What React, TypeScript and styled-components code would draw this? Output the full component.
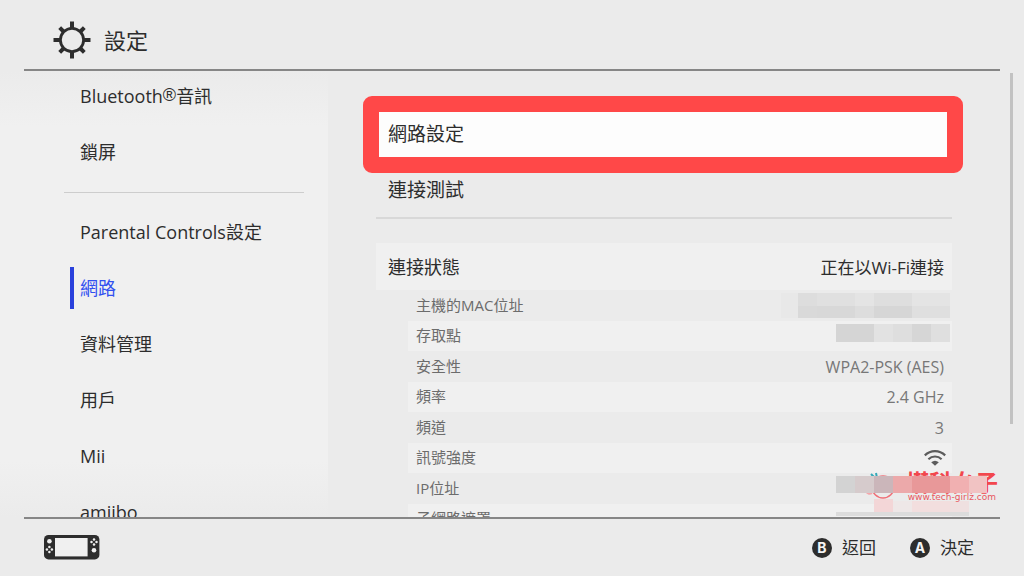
import React from "react";
import styled, { createGlobalStyle } from "styled-components";

const GlobalStyle = createGlobalStyle`
  * { box-sizing: border-box; }
  body {
    margin: 0;
    background: #ebebeb;
    color: #2d2d2d;
    font-family: "Open Sans", "Noto Sans CJK TC", sans-serif;
  }
  button { font: inherit; color: inherit; border: 0; background: none; padding: 0; text-align: left; cursor: pointer; }
`;

const Page = styled.div`
  position: relative;
  display: flex;
  flex-direction: column;
  height: 100vh;
  overflow: hidden;
`;

const Header = styled.header`
  display: flex;
  align-items: center;
  gap: 13px;
  height: 71px;
  margin: 0 24px;
  padding: 11px 0 0 29px;
  border-bottom: 2px solid #868686;
`;

const Title = styled.h1`
  margin: 0;
  font-size: 22px;
  line-height: 32px;
  font-weight: 400;
`;

const Body = styled.div`
  display: flex;
  flex: 1;
  min-height: 0;
`;

const Sidebar = styled.nav`
  display: flex;
  flex-direction: column;
  gap: 14px;
  flex: 0 0 328px;
  padding: 4px 24px 0 64px;
  overflow: hidden;
  background: linear-gradient(#ebebeb, #f0f0f0 56px, #f0f0f0 calc(100% - 56px), #ebebeb);
`;

const NavItem = styled.a<{ $active?: boolean }>`
  display: flex;
  flex: none;
  align-items: center;
  height: 42px;
  margin-left: 6px;
  padding-left: 6px;
  border-left: 4px solid ${(p) => (p.$active ? "#2a41dc" : "transparent")};
  color: ${(p) => (p.$active ? "#3250f0" : "#2d2d2d")};
  font-size: 18px;
  line-height: 24px;
  text-decoration: none;
  white-space: nowrap;
`;

const Registered = styled.span`
  font-family: "Liberation Sans", sans-serif;
  vertical-align: 2px;
  font-size: 18px;
  line-height: 16px;
`;

const NavDivider = styled.hr`
  flex: none;
  width: 100%;
  height: 1px;
  margin: 5px 0 4px;
  border: 0;
  background: #cdcdcd;
`;

const Panel = styled.main`
  flex: 1;
  min-width: 0;
  padding: 36px 58px 0 48px;
  overflow: hidden;
`;

const MenuRow = styled.button<{ $focused?: boolean }>`
  position: relative;
  display: flex;
  align-items: center;
  width: 100%;
  height: 56px;
  padding: 0 12px;
  border-bottom: 2px solid ${(p) => (p.$focused ? "transparent" : "#d8d8d8")};
  background: ${(p) => (p.$focused ? "#fdfdfd" : "none")};
  font-size: 19px;
  line-height: 28px;
`;

const FocusFrame = styled.span`
  position: absolute;
  inset: -11px -11px -12px -13px;
  border: 16px solid #ff4848;
  border-radius: 9px;
`;

const Status = styled.section`
  margin-top: 24px;
`;

const StatusHead = styled.div`
  display: flex;
  align-items: center;
  justify-content: space-between;
  height: 47px;
  padding: 0 8px 0 12px;
  background: #f0f0f0;
  font-size: 17px;
`;

const StatusTitle = styled.h2`
  margin: 0;
  font-size: 18px;
  line-height: 24px;
  font-weight: 400;
`;

const Details = styled.div`
  padding-left: 32px;
`;

const Table = styled.table`
  width: 100%;
  border-collapse: collapse;
  line-height: 20px;
`;

const DetailRow = styled.tr`
  height: 31px;
  &:nth-child(even) { height: 30px; background: #f0f0f0; }
`;

const Label = styled.th`
  padding: 0 8px 2px;
  font-size: 15px;
  font-weight: 400;
  text-align: left;
  color: #6c6c6c;
`;

const Value = styled.td<{ $inset?: number }>`
  padding: 0 ${(p) => p.$inset ?? 8}px;
  color: #777;
  font-size: 16px;
  text-align: right;
  svg { display: block; margin-left: auto; }
`;

const ScrollTrack = styled.div`
  flex: 0 0 14px;
  padding-top: 2px;
`;

const ScrollThumb = styled.div`
  width: 3px;
  height: 79%;
  background: #c2c2c2;
`;

const Footer = styled.footer`
  display: flex;
  align-items: center;
  justify-content: space-between;
  height: 59px;
  margin: 0 24px;
  padding: 0 26px 0 20px;
  border-top: 2px solid #868686;
`;

const Actions = styled.div`
  display: flex;
  gap: 34px;
`;

const Action = styled.button`
  display: flex;
  align-items: center;
  gap: 10px;
  font-size: 17px;
  line-height: 24px;
`;

const KeyBadge = styled.span`
  display: flex;
  align-items: center;
  justify-content: center;
  width: 20px;
  height: 20px;
  border-radius: 50%;
  background: #2d2d2d;
  color: #f4f4f4;
  font-family: Inter, sans-serif;
  font-size: 14px;
  font-weight: 700;
  line-height: 20px;
`;

const Watermark = styled.div`
  position: absolute;
  right: 26px;
  bottom: 57px;
  width: 162px;
  height: 48px;
`;

const BrandMark = styled.svg`
  position: absolute;
  left: 28px;
  top: 0;
`;

const Brand = styled.div`
  position: absolute;
  right: 0;
  top: 1px;
  color: #f2474d;
  font-size: 23px;
  line-height: 20px;
  font-weight: 700;
  white-space: nowrap;
`;

const BrandUrl = styled.div`
  position: absolute;
  right: 2px;
  top: 21px;
  color: #e8585f;
  font-family: "DejaVu Sans", sans-serif;
  font-size: 9px;
  line-height: 10px;
  white-space: nowrap;
`;

const BrandMask = styled.svg`
  position: absolute;
  left: 0;
  top: 0;
`;

type Cell = [x: number, y: number, w: number, h: number, fill: string];

const macCells: Cell[] = [
  [0, 0, 17, 25, "#e8e8e8"],
  [17, 0, 19, 13, "#dddddd"],
  [36, 0, 38, 13, "#e0e0e0"],
  [74, 0, 19, 13, "#e4e4e4"],
  [93, 0, 38, 13, "#dedede"],
  [131, 0, 38, 13, "#e4e4e4"],
  [17, 13, 19, 12, "#d9d9d9"],
  [36, 13, 38, 12, "#d8d8d8"],
  [74, 13, 19, 12, "#dddddd"],
  [93, 13, 38, 12, "#d6d6d6"],
  [131, 13, 38, 12, "#dfdfdf"],
];

const apCells: Cell[] = [
  [0, 0, 38, 18, "#d5d5d5"],
  [38, 0, 19, 18, "#e2e2e2"],
  [57, 0, 19, 18, "#dedede"],
  [76, 0, 19, 18, "#d6d6d6"],
  [95, 0, 19, 18, "#dfdfdf"],
];

const brandCells: Cell[] = [
  [0, 5, 19, 17, "#d3d3d3"],
  [19, 5, 19, 17, "#d6cbcc"],
  [38, 5, 19, 17, "#cbb6ba"],
  [57, 5, 19, 17, "#eca9aa"],
  [76, 5, 38, 17, "#e89899"],
  [114, 5, 19, 17, "#f1b0b1"],
  [133, 5, 18, 17, "#f1c3c3"],
  [38, 28, 19, 13, "#f3d6d7"],
  [57, 30, 19, 11, "#eee7e7"],
  [76, 30, 38, 11, "#f2dede"],
  [114, 30, 19, 11, "#efe0e0"],
  [0, 41, 133, 4, "#dcdcdc"],
];

const Cells = ({ cells }: { cells: Cell[] }) => (
  <>
    {cells.map(([x, y, w, h, fill], i) => (
      <rect key={i} x={x} y={y} width={w} height={h} fill={fill} />
    ))}
  </>
);

const GearIcon = () => (
  <svg width="38" height="38" viewBox="-19 -19 38 38" stroke="#2d2d2d" fill="none" aria-hidden="true">
    <circle r="11.6" strokeWidth="2.8" />
    {[0, 90, 180, 270].map((a) => (
      <path key={a} d="M0-12V-18.5" strokeWidth="4" transform={`rotate(${a})`} />
    ))}
    {[45, 135, 225, 315].map((a) => (
      <path key={a} d="M0-12V-17.4" strokeWidth="4" transform={`rotate(${a})`} />
    ))}
  </svg>
);

const Pad = ({ x, y }: { x: number; y: number }) => (
  <g transform={`translate(${x} ${y})`}>
    <circle cy="-2.5" r="1.25" />
    <circle cy="2.5" r="1.25" />
    <circle cx="-2.5" r="1.25" />
    <circle cx="2.5" r="1.25" />
  </g>
);

const ConsoleIcon = () => (
  <svg width="56" height="25" viewBox="0 0 56 25" fill="#f0f0f0" role="img" aria-label="console">
    <rect width="55.4" height="24.4" rx="4.5" fill="#2d2d2d" />
    <rect x="11" y="3" width="32.6" height="18.4" />
    <circle cx="5.4" cy="6.2" r="2.3" />
    <Pad x={5.4} y={14.5} />
    <Pad x={50} y={7} />
    <circle cx="50" cy="15.2" r="2.3" />
  </svg>
);

const WifiIcon = () => (
  <svg width="22" height="16" viewBox="0 0 22 16" fill="none" stroke="#5c5c5c" strokeWidth="2.2" role="img" aria-label="signal">
    <path d="M0.8 5.4C6.6 -0.2 15.4 -0.2 21.2 5.4" />
    <path d="M4.4 9.2C8.2 5.6 13.8 5.6 17.6 9.2" />
    <path d="M7.2 12.2Q11 9.2 14.8 12.2L11 15.8Z" fill="#5c5c5c" stroke="none" />
  </svg>
);

const Mask = ({ width, height, cells, label }: { width: number; height: number; cells: Cell[]; label: string }) => (
  <svg width={width} height={height} role="img" aria-label={label}>
    <Cells cells={cells} />
  </svg>
);

const navTop = ["Bluetooth®音訊", "鎖屏"];
const navBottom = ["Parental Controls設定", "網路", "資料管理", "用戶", "Mii", "amiibo"];

const NavText = ({ text }: { text: string }) => {
  const [before, after] = text.split("®");
  return after === undefined ? <>{text}</> : <span>{before}<Registered>®</Registered>{after}</span>;
};

export default function App() {
  return (
    <Page>
      <GlobalStyle />
      <Header>
        <GearIcon />
        <Title>設定</Title>
      </Header>
      <Body>
        <Sidebar>
          {navTop.map((t) => (
            <NavItem key={t} href="#"><NavText text={t} /></NavItem>
          ))}
          <NavDivider />
          {navBottom.map((t) => (
            <NavItem key={t} href="#" $active={t === "網路"}><NavText text={t} /></NavItem>
          ))}
        </Sidebar>
        <Panel>
          <MenuRow $focused>
            網路設定
            <FocusFrame />
          </MenuRow>
          <MenuRow>連接測試</MenuRow>
          <Status>
            <StatusHead>
              <StatusTitle>連接狀態</StatusTitle>
              <span>正在以Wi-Fi連接</span>
            </StatusHead>
            <Details>
              <Table>
                <tbody>
                  <DetailRow>
                    <Label scope="row">主機的MAC位址</Label>
                    <Value $inset={2}><Mask width={169} height={25} cells={macCells} label="hidden" /></Value>
                  </DetailRow>
                  <DetailRow>
                    <Label scope="row">存取點</Label>
                    <Value $inset={2}><Mask width={114} height={24} cells={apCells} label="hidden" /></Value>
                  </DetailRow>
                  <DetailRow>
                    <Label scope="row">安全性</Label>
                    <Value>WPA2-PSK (AES)</Value>
                  </DetailRow>
                  <DetailRow>
                    <Label scope="row">頻率</Label>
                    <Value>2.4 GHz</Value>
                  </DetailRow>
                  <DetailRow>
                    <Label scope="row">頻道</Label>
                    <Value>3</Value>
                  </DetailRow>
                  <DetailRow>
                    <Label scope="row">訊號強度</Label>
                    <Value $inset={6}><WifiIcon /></Value>
                  </DetailRow>
                  <DetailRow>
                    <Label scope="row">IP位址</Label>
                    <Value />
                  </DetailRow>
                  <DetailRow>
                    <Label scope="row">子網路遮罩</Label>
                    <Value />
                  </DetailRow>
                </tbody>
              </Table>
            </Details>
          </Status>
        </Panel>
        <ScrollTrack>
          <ScrollThumb />
        </ScrollTrack>
      </Body>
      <Footer>
        <ConsoleIcon />
        <Actions>
          <Action><KeyBadge>B</KeyBadge>返回</Action>
          <Action><KeyBadge>A</KeyBadge>決定</Action>
        </Actions>
      </Footer>
      <Watermark>
        <BrandMark width="40" height="34" fill="none" aria-hidden="true">
          <path d="M7 3L12 8M12 2L13 7" stroke="#35a9b8" strokeWidth="2" />
          <circle cx="19" cy="16" r="11" stroke="#f07078" strokeWidth="1.5" />
          <path d="M2 20Q4 24 8 22" stroke="#f5a5aa" strokeWidth="2" />
        </BrandMark>
        <Brand>塔科女子</Brand>
        <BrandMask width="162" height="48" aria-hidden="true">
          <Cells cells={brandCells} />
        </BrandMask>
        <BrandUrl>www.tech-girlz.com</BrandUrl>
      </Watermark>
    </Page>
  );
}
